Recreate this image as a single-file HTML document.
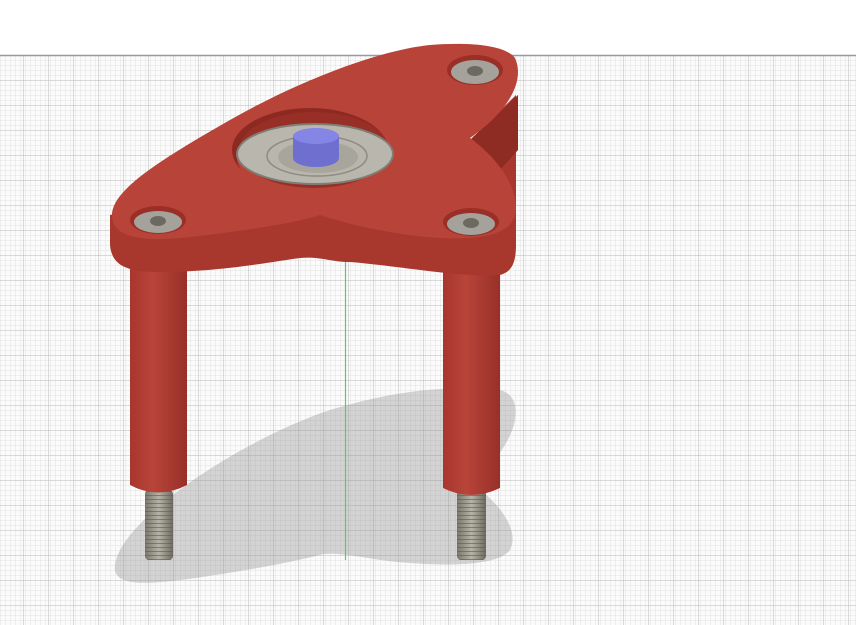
<!DOCTYPE html>
<html><head><style>
html,body{margin:0;padding:0;background:#fff;width:856px;height:625px;overflow:hidden}
</style></head><body>
<svg width="856" height="625" viewBox="0 0 856 625" xmlns="http://www.w3.org/2000/svg">
<defs>
<pattern id="minor" width="5" height="5" patternUnits="userSpaceOnUse">
<path d="M0 0H5M0 0V5" stroke="#e2e2e2" stroke-width="1" fill="none"/>
</pattern>
<pattern id="major" width="25" height="25" patternUnits="userSpaceOnUse" x="-2" y="5">
<path d="M0 0H25M0 0V25" stroke="#b8b8b8" stroke-width="1" fill="none"/>
</pattern>
<linearGradient id="leg" x1="0" x2="1">
<stop offset="0" stop-color="#a8362c"/><stop offset=".4" stop-color="#b8443a"/><stop offset="1" stop-color="#983028"/>
</linearGradient>
<linearGradient id="screw" x1="0" x2="1">
<stop offset="0" stop-color="#7a776c"/><stop offset=".5" stop-color="#b5b2a6"/><stop offset="1" stop-color="#6d6a60"/>
</linearGradient>
<pattern id="thread" width="4" height="4" patternUnits="userSpaceOnUse">
<path d="M0 3.5H4" stroke="#5d5a52" stroke-width="1"/>
</pattern>
</defs>
<rect x="0" y="55" width="856" height="570" fill="#fbfbfb"/>
<rect x="0" y="55" width="856" height="570" fill="url(#minor)"/>
<rect x="0" y="55" width="856" height="570" fill="url(#major)"/>
<line x1="0" y1="55.5" x2="856" y2="55.5" stroke="#9a9a9a" stroke-width="1.5"/>

<!-- shadow -->
<path d="M115 565 C120 520 240 440 330 410 C390 392 440 385 500 390 C520 395 520 420 505 445 C490 470 470 478 475 485 C500 505 520 530 510 550 C495 570 420 565 380 560 C350 555 330 552 320 555 C280 565 220 575 180 580 C140 585 112 585 115 565Z" fill="#8a8a8a" opacity=".35"/>
<line x1="345.5" y1="255" x2="345.5" y2="560" stroke="#4fd34f" stroke-width="1.2"/>

<!-- legs -->
<rect x="145" y="490" width="28" height="70" rx="4" fill="url(#screw)"/>
<rect x="145" y="490" width="28" height="70" rx="4" fill="url(#thread)" opacity=".6"/>
<rect x="457" y="490" width="29" height="70" rx="4" fill="url(#screw)"/>
<rect x="457" y="490" width="29" height="70" rx="4" fill="url(#thread)" opacity=".6"/>
<path d="M130 250 H187 V485 Q158 500 130 485Z" fill="url(#leg)"/>
<path d="M443 265 H500 V488 Q471 502 443 488Z" fill="url(#leg)"/>

<!-- plate side -->
<path d="M110 215 L110 245 C112 265 125 272 160 272 C220 272 270 262 300 258 C320 256 330 262 350 262 C400 266 460 278 500 275 C512 272 516 262 516 245 L516 95 L470 140 Z" fill="#a8382e"/>
<path d="M470 140 L518 95 L518 150 L500 170 Z" fill="#8e2c24"/>
<!-- top face -->
<path d="M112 215 C112 190 160 160 230 120 C300 80 380 50 430 45 C470 42 505 45 515 58 C525 80 510 110 470 138 C500 160 520 190 515 215 C510 235 480 240 440 238 C400 236 350 225 320 215 C300 222 240 232 180 238 C135 242 112 235 112 215Z" fill="#b84339"/>
<!-- bearing recess -->
<ellipse cx="310" cy="150" rx="78" ry="42" fill="#8c2a22"/>
<ellipse cx="315" cy="158" rx="78" ry="37" fill="#b84339"/>
<ellipse cx="314" cy="150" rx="75" ry="38" fill="#982f27"/>
<ellipse cx="315" cy="154" rx="78" ry="30" fill="#b9b6ae"/>
<ellipse cx="315" cy="154" rx="78" ry="30" fill="none" stroke="#807d74" stroke-width="2"/>
<ellipse cx="317" cy="156" rx="50" ry="20" fill="none" stroke="#8f8c83" stroke-width="1.5"/>
<ellipse cx="318" cy="157" rx="40" ry="16" fill="#a8a59c"/>
<!-- shaft -->
<path d="M293 136 V158 A23 9 0 0 0 339 158 V136Z" fill="#6f6fcf"/>
<ellipse cx="316" cy="136" rx="23" ry="8" fill="#8585e6"/>
<!-- screws -->
<g>
<ellipse cx="475" cy="70" rx="28" ry="15" fill="#9a2f27"/>
<ellipse cx="475" cy="72" rx="24" ry="12" fill="#a4a29a"/>
<ellipse cx="475" cy="71" rx="8" ry="5" fill="#6b6960"/>
<ellipse cx="158" cy="220" rx="28" ry="14" fill="#9a2f27"/>
<ellipse cx="158" cy="222" rx="24" ry="11" fill="#a4a29a"/>
<ellipse cx="158" cy="221" rx="8" ry="5" fill="#6b6960"/>
<ellipse cx="471" cy="222" rx="28" ry="14" fill="#9a2f27"/>
<ellipse cx="471" cy="224" rx="24" ry="11" fill="#a4a29a"/>
<ellipse cx="471" cy="223" rx="8" ry="5" fill="#6b6960"/>
</g>
</svg>
</body></html>
